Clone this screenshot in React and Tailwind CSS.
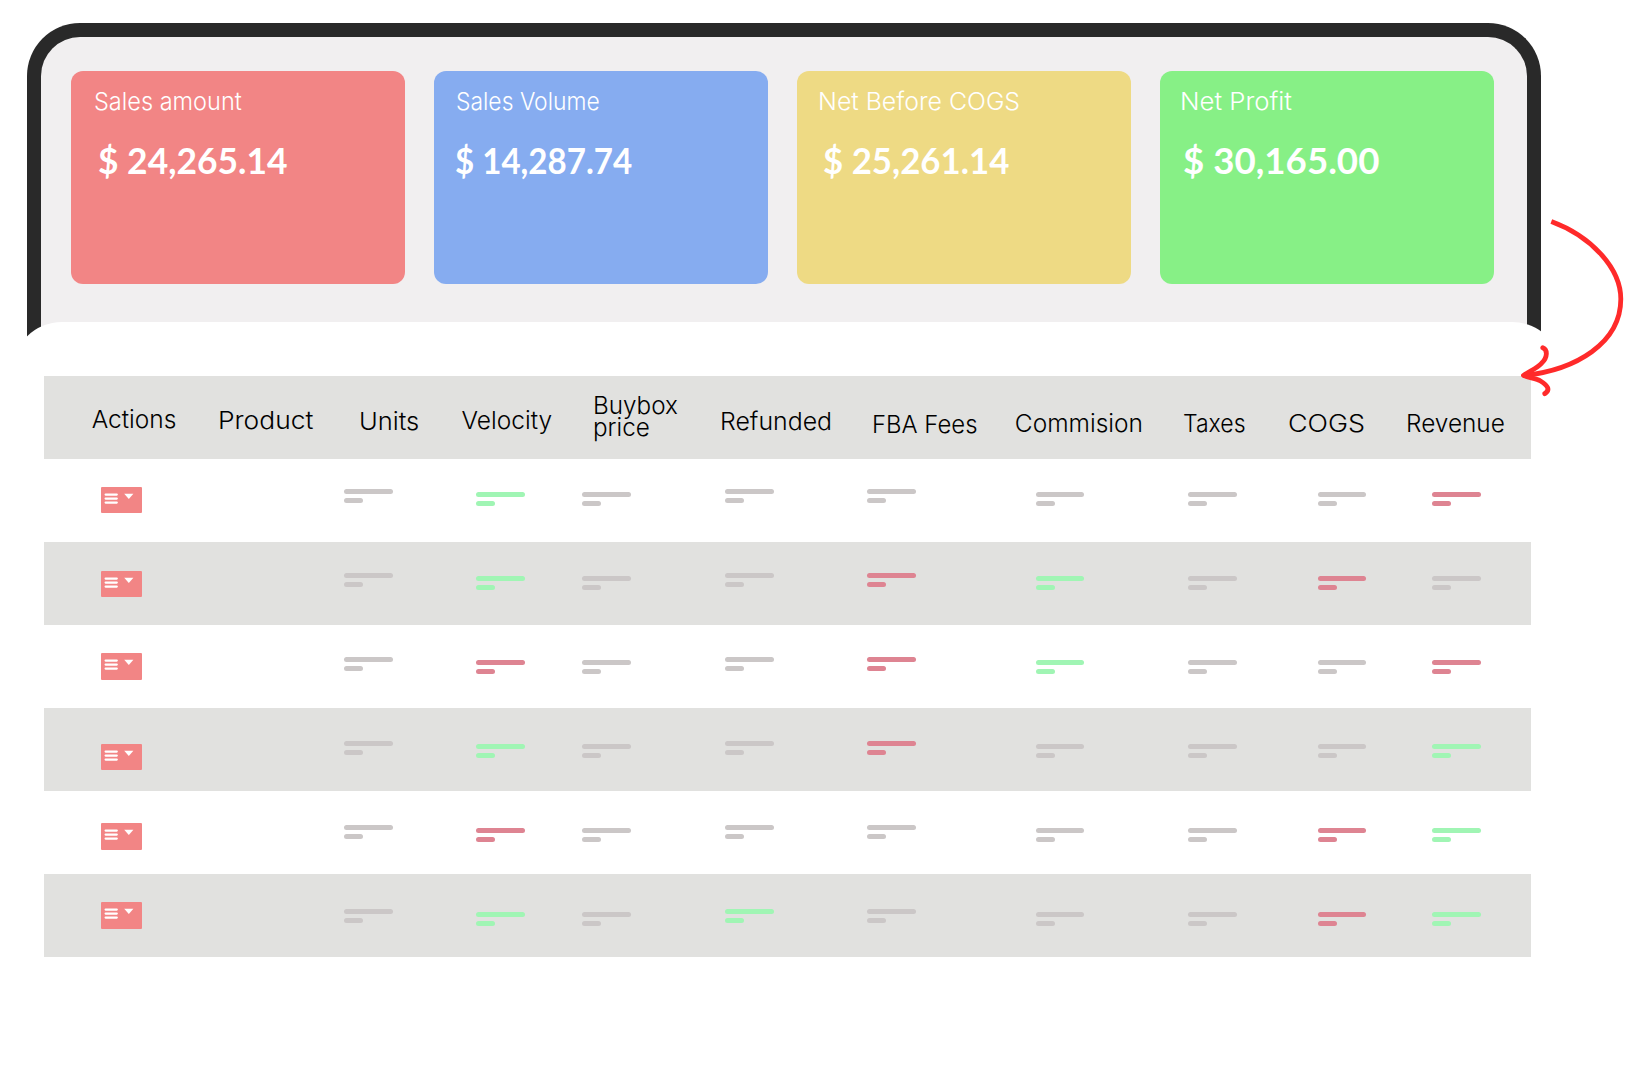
const cards = [
  { label: "Sales amount", amount: "$ 24,265.14", bg: "bg-[#f28585]", labelCls: "ml-[23.4px] scale-x-[0.96]", amountCls: "ml-[27px] scale-x-[0.983]" },
  { label: "Sales Volume", amount: "$ 14,287.74", bg: "bg-[#86acf0]", labelCls: "ml-[22.5px] scale-x-[0.934]", amountCls: "ml-[21.5px] scale-x-[0.919]" },
  { label: "Net Before COGS", amount: "$ 25,261.14", bg: "bg-[#eeda84]", labelCls: "ml-[20.9px] scale-x-[1.015]", amountCls: "ml-[26.5px] scale-x-[0.967]" },
  { label: "Net Profit", amount: "$ 30,165.00", bg: "bg-[#87f086]", labelCls: "ml-[20px] scale-x-[1.049]", amountCls: "ml-[23.2px] scale-x-[1.019]" },
];

const headers = [
  { lines: ["Actions"], cls: "pt-[31.1px]" },
  { lines: ["Product"], cls: "pt-[32.1px] scale-x-[1.077]" },
  { lines: ["Units"], cls: "pt-[33.1px] scale-x-[1.04]" },
  { lines: ["Velocity"], cls: "pt-[32.1px]" },
  { lines: ["Buybox", "price"], cls: "pt-[18.1px] scale-x-[0.99] leading-[22px]" },
  { lines: ["Refunded"], cls: "pt-[33.1px] scale-x-[1.015]" },
  { lines: ["FBA Fees"], cls: "pt-[36.1px] scale-x-[0.975]" },
  { lines: ["Commision"], cls: "pt-[35.1px]" },
  { lines: ["Taxes"], cls: "pt-[35.1px] scale-x-[0.94]" },
  { lines: ["COGS"], cls: "pt-[35.1px] scale-x-[1.1]" },
  { lines: ["Revenue"], cls: "pt-[35.1px] scale-x-[0.995]" },
];

const tones = { n: "bg-[#cbc7c7]", g: "bg-[#a0f5b4]", r: "bg-[#de8492]" };

// One letter per column, from Units to Revenue: n = neutral, g = gain, r = loss.
const rows = [
  { bg: "", button: "mt-[27.3px]", bars: "pt-[29.2px]", cells: "ngnnnnnnr" },
  { bg: "bg-[#e1e1df]", button: "mt-[28.4px]", bars: "pt-[30.4px]", cells: "ngnnrgnrn" },
  { bg: "", button: "mt-[28px]", bars: "pt-[31.6px]", cells: "nrnnrgnnr" },
  { bg: "bg-[#e1e1df]", button: "mt-[35.6px]", bars: "pt-[32.9px]", cells: "ngnnrnnng" },
  { bg: "", button: "mt-[32px]", bars: "pt-[34.1px]", cells: "nrnnnnnrg" },
  { bg: "bg-[#e1e1df]", button: "mt-[28.4px]", bars: "pt-[35.2px]", cells: "ngngnnnrg" },
];

const raised = [true, false, false, true, true, false, false, false, false];

function Card({ card }) {
  return (
    <div className={`h-[213.6px] rounded-[12px] text-white ${card.bg}`}>
      <div className={`mt-[18.8px] origin-left font-[Inter] text-[24.5px] leading-[24.5px] font-light whitespace-nowrap ${card.labelCls}`}>
        {card.label}
      </div>
      <div className={`mt-[28px] origin-left font-[Lato] text-[36px] leading-[36px] font-bold whitespace-nowrap ${card.amountCls}`}>
        {card.amount}
      </div>
    </div>
  );
}

function ActionButton({ className }) {
  return (
    <div className={`flex h-[26.5px] w-[41px] rounded-[1px] bg-[#f28585] ${className}`}>
      <svg viewBox="0 0 41 26.5" className="h-full w-full">
        <g stroke="#fff" strokeWidth="2.2" strokeLinecap="round">
          <path d="M4.6 7.6H15.8M4.6 11.6H15.8M4.6 15.6H15.8" />
        </g>
        <path d="M23.2 6.7H32.4L27.8 11.9Z" fill="#fff" />
      </svg>
    </div>
  );
}

function Bars({ tone }) {
  return (
    <div className="flex flex-col gap-1">
      <div className={`h-[5px] w-[48.7px] rounded-full ${tone}`} />
      <div className={`h-[5px] w-[19px] rounded-full ${tone}`} />
    </div>
  );
}

export default function App() {
  return (
    <div className="relative h-[1069px] w-[1637px] overflow-hidden bg-white pt-[23px]">
      <div className="ml-[27px] h-[327px] w-[1514px] rounded-t-[53px] border-[14.3px] border-b-0 border-[#292929] bg-[#f1eff0] pt-[33.6px] pl-[29.9px]">
        <div className="grid grid-cols-[repeat(4,334.5px)] gap-x-[28.4px]">
          {cards.map((c) => (
            <Card key={c.label} card={c} />
          ))}
        </div>
      </div>

      <div className="relative -mt-7 ml-[12.4px] w-[1550px] rounded-t-[50px] bg-white pt-[54.4px] pl-[31.4px]">
        <div className="w-[1487px]">
          <div className="grid h-[82.95px] grid-cols-[126px_141.4px_102.5px_131.8px_126.2px_152.9px_142.4px_167.7px_105.2px_117.8px_auto] bg-[#e1e1df] pl-[47.9px] font-[Inter] text-[24.5px] leading-[24.5px] font-[360] text-black">
            {headers.map((h) => (
              <div key={h.lines[0]} className={`origin-left whitespace-nowrap ${h.cls}`}>
                {h.lines.map((l) => (
                  <div key={l}>{l}</div>
                ))}
              </div>
            ))}
          </div>
          {rows.map((row, i) => (
            <div
              key={i}
              className={`grid h-[82.95px] grid-cols-[116.6px_126.6px_131.7px_106.3px_142.7px_142.6px_168.3px_152.1px_129.8px_114.4px_auto] pl-[57.2px] ${row.bg}`}
            >
              <ActionButton className={row.button} />
              <div />
              {row.cells.split("").map((c, j) => (
                <div key={j} className={row.bars}>
                  <div className={raised[j] ? "" : "pt-[3.2px]"}>
                    <Bars tone={tones[c]} />
                  </div>
                </div>
              ))}
            </div>
          ))}
        </div>
      </div>

      <svg viewBox="1510 210 127 200" className="absolute top-[210px] left-[1510px] h-[200px] w-[127px]" fill="none" stroke="#ff2a2a">
        <path d="M1551.3 221.4C1591 236 1620.8 268 1620.8 299C1620.8 343 1576 370 1523.5 375.5" strokeWidth="4.8" />
        <path
          d="M1542.8 347.7C1547.5 349.5 1548 357 1541.5 363.3C1537 368 1530 371 1523.5 375.5C1531 378 1537 379 1540.5 381C1548 385.5 1550.5 390 1544.8 393.6"
          strokeWidth="4.8"
          strokeLinecap="round"
          strokeLinejoin="round"
        />
      </svg>
    </div>
  );
}
